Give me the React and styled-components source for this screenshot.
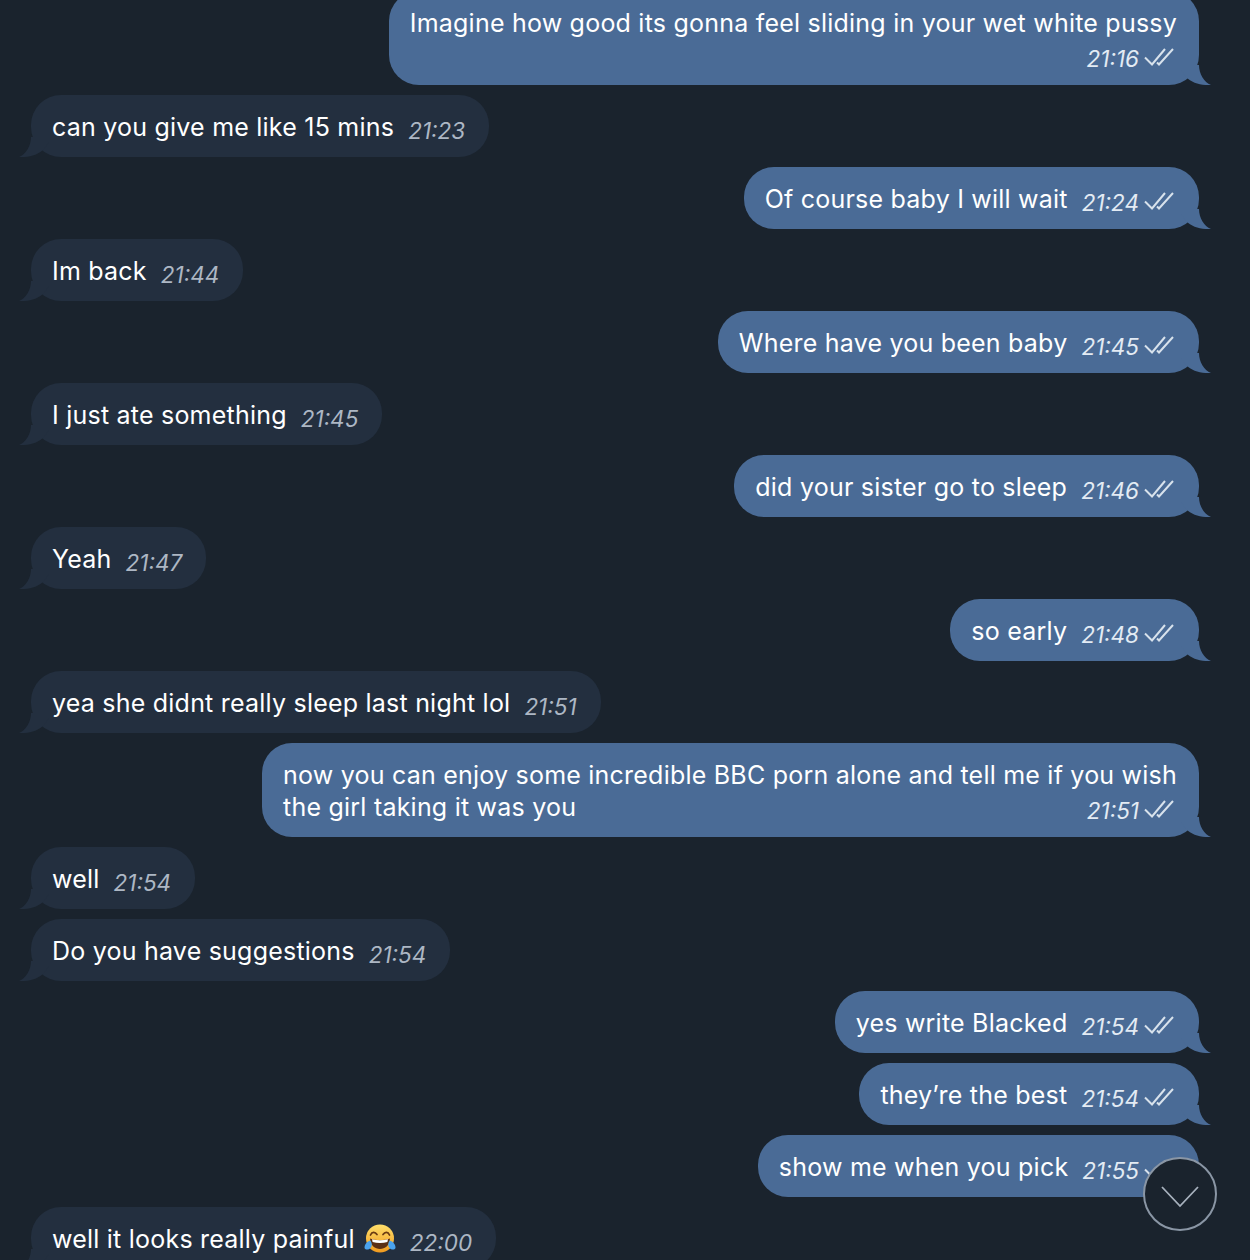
import React from 'react';
import styled, { createGlobalStyle } from 'styled-components';

const GlobalStyle = createGlobalStyle`
  html, body {
    margin: 0;
    height: 100%;
    background: #1a232d;
    overflow: hidden;
  }
`;

const messages = [
  { out: true, lead: 'Imagine how good its gonna feel sliding in your wet white pussy', time: '21:16' },
  { text: 'can you give me like 15 mins', time: '21:23' },
  { out: true, text: 'Of course baby I will wait', time: '21:24' },
  { text: 'Im back', time: '21:44' },
  { out: true, text: 'Where have you been baby', time: '21:45' },
  { text: 'I just ate something', time: '21:45' },
  { out: true, text: 'did your sister go to sleep', time: '21:46' },
  { text: 'Yeah', time: '21:47' },
  { out: true, text: 'so early', time: '21:48' },
  { text: 'yea she didnt really sleep last night lol', time: '21:51' },
  {
    out: true,
    lead: 'now you can enjoy some incredible BBC porn alone and tell me if you wish',
    text: 'the girl taking it was you',
    time: '21:51',
  },
  { text: 'well', time: '21:54' },
  { text: 'Do you have suggestions', time: '21:54' },
  { out: true, text: 'yes write Blacked', time: '21:54' },
  { out: true, text: 'they’re the best', time: '21:54' },
  { out: true, text: 'show me when you pick', time: '21:55' },
  { text: 'well it looks really painful', emoji: true, time: '22:00' },
];

function Tail({ out }) {
  return (
    <TailSvg $out={out} viewBox="0 0 30 20" aria-hidden="true">
      <path d="M18 0C18 9 23 17 30 20C20 20.6 11 18 5 12L0 5L0 0Z" />
    </TailSvg>
  );
}

function Checks() {
  return (
    <CheckSvg viewBox="0 0 30 18" aria-hidden="true">
      <path d="M1 9.5L8 16.5L21 1" />
      <path d="M13 14.5L15 16.5L29 1" />
    </CheckSvg>
  );
}

function LaughEmoji() {
  return (
    <EmojiSvg viewBox="0 0 32 32" aria-hidden="true">
      <defs>
        <linearGradient id="face" x1="0" y1="0" x2="0" y2="1">
          <stop offset="0" stopColor="#ffdf6b" />
          <stop offset="1" stopColor="#f09a1e" />
        </linearGradient>
      </defs>
      <circle cx="16" cy="15.5" r="14" fill="url(#face)" />
      <path d="M6.5 12C8 8.5 11 8.5 13 11.5M19 11.5C21 8.5 24 8.5 25.5 12" fill="none" stroke="#6a3b12" strokeWidth="1.7" strokeLinecap="round" />
      <path d="M6 15.5C12 17.5 20 17.5 26 15.5C25.5 22.5 21 26 16 26C11 26 6.5 22.5 6 15.5Z" fill="#5b2f14" />
      <path d="M8 16.3C13 17.6 19 17.6 24 16.3L23.4 19C19 20.2 13 20.2 8.6 19Z" fill="#fff" />
      <path d="M0.5 25C0.5 21 3 18.5 6.5 17.5C8 20 8.5 23 6.5 25C4.5 27 1.5 27 0.5 25Z" fill="#4aa3ee" />
      <path d="M31.5 25C31.5 21 29 18.5 25.5 17.5C24 20 23.5 23 25.5 25C27.5 27 30.5 27 31.5 25Z" fill="#4aa3ee" />
    </EmojiSvg>
  );
}

function Message({ out, lead, text, time, emoji }) {
  return (
    <Bubble $out={out} $stacked={!!lead}>
      {lead && <Text>{lead}</Text>}
      <LastRow>
        {text && (
          <Text>
            {text}
            {emoji && <LaughEmoji />}
          </Text>
        )}
        <Meta $stacked={!!lead}>
          <Time $out={out}>{time}</Time>
          {out && <Checks />}
        </Meta>
      </LastRow>
      <Tail out={out} />
    </Bubble>
  );
}

export default function App() {
  return (
    <Page>
      <GlobalStyle />
      <Thread>
        {messages.map((m, i) => (
          <Message key={i} {...m} />
        ))}
      </Thread>
      <ScrollDown aria-label="Scroll to bottom">
        <svg width="38" height="22" viewBox="0 0 38 22" fill="none" stroke="#a7b1bd" strokeWidth="1.8">
          <path d="M1 1L19 20L37 1" />
        </svg>
      </ScrollDown>
    </Page>
  );
}

const Page = styled.div`
  position: relative;
  height: 1260px;
  overflow: hidden;
  background: #1a232d;
  font-family: Inter, "Noto Sans", "Liberation Sans", sans-serif;
`;

const Thread = styled.div`
  display: flex;
  flex-direction: column;
  gap: 10px;
  margin-top: -9px;
  padding: 0 51px 0 31px;
`;

const Bubble = styled.div`
  position: relative;
  align-self: ${(p) => (p.$out ? 'flex-end' : 'flex-start')};
  padding: 16px ${(p) => (p.$stacked ? '22px' : p.$out ? '25px' : '24px')} 14px 21px;
  border-radius: 30px;
  background: ${(p) => (p.$out ? '#4a6b96' : '#232f3f')};
  color: #fff;
`;

const LastRow = styled.div`
  display: flex;
  justify-content: space-between;
  align-items: flex-start;
`;

const Text = styled.div`
  white-space: pre;
  font-size: 25px;
  line-height: 32px;
  letter-spacing: 0.22px;
`;

const Meta = styled.div`
  display: flex;
  align-items: center;
  flex-shrink: 0;
  gap: 5px;
  height: 32px;
  margin-left: ${(p) => (p.$stacked ? 'auto' : '14px')};
  margin-right: ${(p) => (p.$stacked ? '3px' : '0')};
`;

const Time = styled.span`
  position: relative;
  top: 3px;
  font-size: 22.5px;
  font-style: italic;
  color: ${(p) => (p.$out ? '#e3ebf4' : '#adb7c4')};
`;

const CheckSvg = styled.svg`
  position: relative;
  top: 2px;
  width: 30px;
  height: 18px;
  fill: none;
  stroke: #d8e2ec;
  stroke-width: 2;
`;

const TailSvg = styled.svg`
  position: absolute;
  bottom: 0;
  width: 30px;
  height: 20px;
  ${(p) => (p.$out ? 'right: -12px;' : 'left: -12px; transform: scaleX(-1);')}
  fill: ${(p) => (p.$out ? '#4a6b96' : '#232f3f')};
`;

const EmojiSvg = styled.svg`
  width: 32px;
  height: 32px;
  margin: -6px 0 -6px 9px;
  vertical-align: -1px;
`;

const ScrollDown = styled.button`
  position: absolute;
  left: 1143px;
  top: 1157px;
  width: 74px;
  height: 74px;
  padding: 6px 0 0;
  display: flex;
  align-items: center;
  justify-content: center;
  border: 2px solid #8a96a5;
  border-radius: 50%;
  background: #1a232d;
`;
